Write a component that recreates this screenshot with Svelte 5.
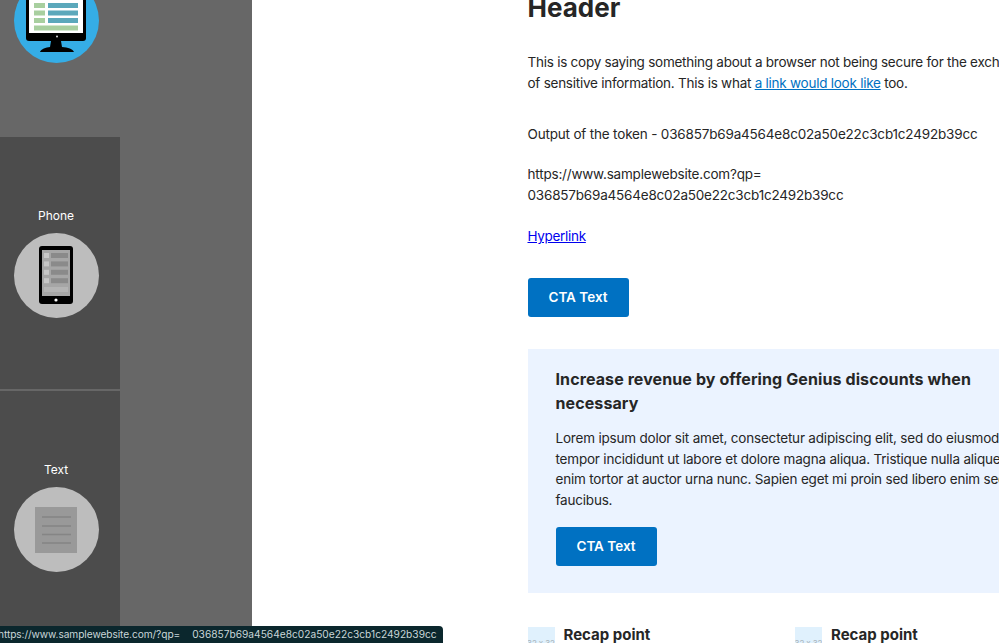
<script>
  const points = [0, 1];
</script>

<div class="page">
  <aside class="side">
    <div class="top">
      <div class="circle blue">
        <svg width="85" height="85" viewBox="0 0 85 85">
          <rect x="12" y="-10" width="60" height="73" rx="3" fill="#000" />
          <rect x="15" y="-10" width="54" height="65" fill="#fff" />
          <g fill="#a8cf9f">
            <rect x="20" y="25" width="11" height="5" />
            <rect x="20" y="32.500" width="11" height="5" />
            <rect x="20" y="40" width="11" height="5" />
            <rect x="20" y="47.500" width="44" height="5" />
          </g>
          <g fill="#5ba8bb">
            <rect x="34" y="25" width="30" height="5" />
            <rect x="34" y="32.500" width="30" height="5" />
            <rect x="34" y="40" width="30" height="5" />
          </g>
          <path d="M37 63h10l1 6c6 .5 11 2 12 5H26c1-3 6-4.500 10-5z" fill="#000" />
          <circle cx="43" cy="58.500" r="1" fill="#ddd" />
        </svg>
      </div>
    </div>
    <div class="tile first">
      <span class="label">Phone</span>
      <div class="circle grey">
        <svg width="85" height="85" viewBox="0 0 85 85">
          <rect x="25" y="13" width="34" height="58" rx="3" fill="#000" />
          <rect x="28" y="17" width="28" height="46" fill="#a6a6a6" />
          {#each [0, 1, 2, 3] as i}
            <rect x="30" y={20 + i * 8.400} width="5" height="5" fill="#c6c6c6" />
            <rect x="37" y={20 + i * 8.400} width="17" height="5" fill="#8a8a8a" />
          {/each}
          <rect x="30" y="54" width="24" height="5" fill="#b4b4b4" />
          <circle cx="42" cy="67" r="1.600" fill="#fff" />
        </svg>
      </div>
    </div>
    <div class="tile second">
      <span class="label">Text</span>
      <div class="circle grey">
        <svg width="85" height="85" viewBox="0 0 85 85">
          <rect x="21" y="20" width="42" height="46" fill="#999" />
          <g stroke="#858585" stroke-width="1.500">
            <line x1="28" x2="57" y1="30" y2="30" />
            <line x1="28" x2="57" y1="39" y2="39" />
            <line x1="28" x2="57" y1="47.500" y2="47.500" />
            <line x1="28" x2="57" y1="56" y2="56" />
          </g>
        </svg>
      </div>
    </div>
  </aside>

  <main class="main">
    <h1>Header</h1>
    <p class="intro">
      This is copy saying something about a browser not being secure for the exchange<br />
      of sensitive information. This is what <a class="blue-link" href="#a">a link would look like</a> too.
    </p>
    <p class="token">Output of the token - 036857b69a4564e8c02a50e22c3cb1c2492b39cc</p>
    <p class="url">https://www.samplewebsite.com?qp=<br />036857b69a4564e8c02a50e22c3cb1c2492b39cc</p>
    <p class="hyper"><a href="#b">Hyperlink</a></p>
    <button class="cta">CTA Text</button>

    <section class="banner">
      <h2>Increase revenue by offering Genius discounts when<br />necessary</h2>
      <p>
        Lorem ipsum dolor sit amet, consectetur adipiscing elit, sed do eiusmod<br />
        tempor incididunt ut labore et dolore magna aliqua. Tristique nulla aliquet<br />
        enim tortor at auctor urna nunc. Sapien eget mi proin sed libero enim sed<br />
        faucibus.
      </p>
      <button class="cta">CTA Text</button>
    </section>

    <div class="recap">
      {#each points as p}
        <div class="point">
          <div class="thumb"><span>32 x 32</span></div>
          <strong>Recap point</strong>
        </div>
      {/each}
    </div>
  </main>

  <div class="status"><span class="status-url">https://www.samplewebsite.com/?qp=</span><span class="status-token">036857b69a4564e8c02a50e22c3cb1c2492b39cc</span></div>
</div>

<style>
  :global(body) {
    margin: 0;
    background: #fff;
  }
  .page {
    position: relative;
    display: flex;
    width: 999px;
    height: 643px;
    overflow: hidden;
    font-family: Inter, "Liberation Sans", sans-serif;
    color: #262626;
  }
  .side {
    flex: none;
    width: 252px;
    height: 643px;
    background: #676767;
    display: flex;
    flex-direction: column;
    align-items: flex-start;
  }
  .top {
    height: 137px;
    padding-left: 14px;
    box-sizing: border-box;
  }
  .circle {
    width: 85px;
    height: 85px;
    border-radius: 50%;
    overflow: hidden;
  }
  .circle svg {
    display: block;
  }
  .blue {
    background: #35ade6;
    margin-top: -22px;
  }
  .grey {
    background: #bdbdbd;
  }
  .tile {
    width: 120px;
    padding-right: 8px;
    background: #4c4c4c;
    display: flex;
    flex-direction: column;
    align-items: center;
    box-sizing: border-box;
  }
  .first {
    height: 252px;
    padding-top: 71px;
  }
  .second {
    flex: 1;
    margin-top: 2px;
    padding-top: 71px;
  }
  .label {
    color: #fff;
    font-size: 12px;
    line-height: 16px;
    margin-bottom: 9px;
  }
  .main {
    flex: 1;
    min-width: 0;
    padding: 0 0 0 275.5px;
    white-space: nowrap;
    font-size: 13.5px;
    letter-spacing: -0.2px;
    line-height: 21px;
  }
  h1 {
    margin: -8px 0 0;
    font-size: 26px;
    line-height: 32px;
    font-weight: 700;
    letter-spacing: 0;
  }
  p {
    margin: 0;
  }
  .intro {
    margin-top: 28px;
    letter-spacing: -0.25px;
  }
  .token {
    margin-top: 30px;
    letter-spacing: -0.18px;
  }
  .url {
    margin-top: 19px;
  }
  .hyper {
    margin-top: 20px;
    letter-spacing: -0.3px;
  }
  a {
    color: #0000ee;
    text-decoration: underline;
  }
  .blue-link {
    color: #0071c2;
  }
  .cta {
    display: block;
    width: 101px;
    height: 39px;
    padding: 0 0 1px;
    border: 0;
    border-radius: 3px;
    background: #0071c2;
    color: #fff;
    font: 600 13.5px/20px Inter, "Liberation Sans", sans-serif;
  }
  .hyper + .cta {
    margin-top: 31px;
  }
  .banner {
    margin-top: 32px;
    padding: 18px 0 27px 28px;
    height: 244px;
    box-sizing: border-box;
    background: #ebf3ff;
  }
  h2 {
    margin: 0;
    font-size: 16px;
    letter-spacing: 0.1px;
    line-height: 24px;
    font-weight: 700;
  }
  .banner p {
    margin-top: 13px;
    line-height: 20.7px;
  }
  .banner .cta {
    margin-top: 16px;
  }
  .recap {
    display: flex;
    margin-top: 34px;
  }
  .point {
    flex: none;
    width: 267.5px;
    display: flex;
    align-items: flex-start;
    gap: 9px;
  }
  .thumb {
    display: flex;
    align-items: center;
    justify-content: center;
    width: 27px;
    height: 32px;
    background: #e0f1fd;
    overflow: hidden;
  }
  .thumb span {
    font-size: 8px;
    letter-spacing: -0.1px;
    line-height: 10px;
    white-space: nowrap;
    color: #a9b4bb;
  }
  .point strong {
    font-size: 15px;
    letter-spacing: 0;
    line-height: 16px;
    font-weight: 700;
  }
  .status {
    position: absolute;
    left: -2px;
    bottom: 0;
    width: 445px;
    height: 17px;
    background: #0b272d;
    border-top-right-radius: 4px;
    color: #c9d6d8;
    font-size: 10.2px;
    line-height: 17px;
    white-space: nowrap;
    overflow: hidden;
  }
  .status-url {
    letter-spacing: -0.09px;
  }
  .status-token {
    margin-left: 12px;
  }
</style>
